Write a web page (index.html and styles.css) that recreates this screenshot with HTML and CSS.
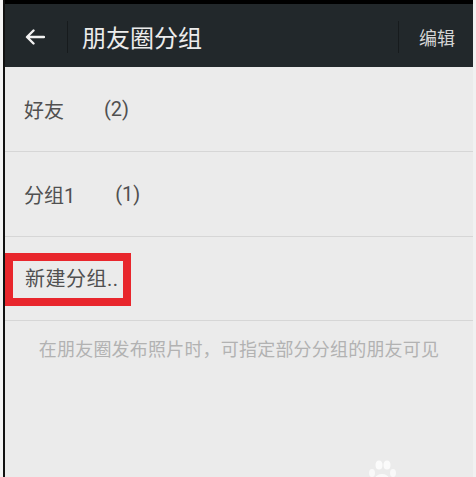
FILE: index.html
```html
<!DOCTYPE html>
<html lang="zh-CN">
<head>
    <meta charset="UTF-8">
    <meta name="viewport" content="width=device-width, initial-scale=1.0">
    <title>朋友圈分组</title>
    <link rel="stylesheet" href="styles.css">
</head>
<body>
    <div class="page">
        <div class="status-strip"></div>

        <div class="top-bar">
            <span class="back-icon">
                <svg width="20" height="16" viewBox="0 0 20 16">
                    <path d="M19 8H2.5M8.5 1.5L2 8l6.5 6.5" fill="none" stroke="#f2f2f2" stroke-width="2.4" stroke-linecap="round" stroke-linejoin="round"/>
                </svg>
            </span>
            <span class="bar-divider"></span>
            <span class="title">朋友圈分组</span>
            <span class="bar-divider right"></span>
            <span class="edit">编辑</span>
        </div>

        <div class="group-list">
            <div class="group-row">好友<span class="count">(2)</span></div>
            <div class="group-row">分组1<span class="count">(1)</span></div>
            <div class="group-row new-row">
                <span class="marked">新建分组..</span>
            </div>
        </div>

        <p class="hint">在朋友圈发布照片时，可指定部分分组的朋友可见</p>

        <!-- faint watermark in the corner -->
        <svg class="watermark" width="40" height="24" viewBox="0 0 40 24">
            <ellipse cx="17" cy="6" rx="3.5" ry="4.5" fill="#fff" opacity="0.8"/>
            <ellipse cx="25" cy="6" rx="3.5" ry="4.5" fill="#fff" opacity="0.8"/>
            <ellipse cx="10" cy="14" rx="3" ry="4" fill="#fff" opacity="0.7"/>
            <ellipse cx="31" cy="14" rx="3" ry="4" fill="#fff" opacity="0.7"/>
            <ellipse cx="20" cy="20" rx="7" ry="5" fill="#fff" opacity="0.7"/>
        </svg>
    </div>
</body>
</html>
```

FILE: styles.css
```css
body {
    margin: 0;
    background: #f4f4f4;
    font-family: Roboto, "Noto Sans CJK SC", sans-serif;
}
.page {
    position: relative;
    margin-left: 3px;
    border-left: 2px solid #111;
    border-right: 3px solid #f1f1f1;
    height: 477px;
    background: #ebebeb;
    overflow: hidden;
}
.status-strip {
    height: 4px;
    background: #000;
}
.top-bar {
    display: flex;
    align-items: center;
    height: 63px;
    padding: 2px 18px 0 20px;
    box-sizing: border-box;
    background: #22282b;
}
.back-icon {
    display: flex;
    width: 20px;
    height: 16px;
}
.bar-divider {
    width: 1px;
    height: 32px;
    margin-left: 22px;
    background: #171b1d;
}
.bar-divider.right {
    margin-left: auto;
}
.title {
    margin-left: 14px;
    color: #ececec;
    font-size: 24px;
}
.edit {
    margin-left: 20px;
    color: #d6d6d6;
    font-size: 18px;
}
.group-list {
    display: flex;
    flex-direction: column;
}
.group-row {
    display: flex;
    align-items: center;
    height: 84px;
    padding-left: 19px;
    border-bottom: 1px solid #d6d6d6;
    color: #505050;
    font-size: 20px;
}
.count {
    margin-left: 40px;
}
.new-row {
    padding-left: 0;
    padding-top: 2px;
    box-sizing: border-box;
}
.marked {
    display: inline-block;
    padding: 0 4px 0 12px;
    line-height: 37px;
    letter-spacing: 0.5px;
    border: 8px solid #e8262c;
}
.hint {
    margin: 0;
    padding-top: 16px;
    text-align: center;
    color: #b2b2b2;
    font-size: 18px;
    line-height: 26px;
    letter-spacing: 0.2px;
}
.watermark {
    position: absolute;
    left: 357px;
    bottom: -6px;
}
```
